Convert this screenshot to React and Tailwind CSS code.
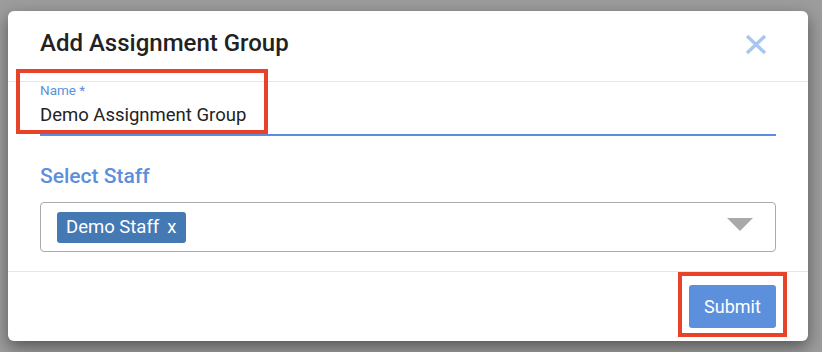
export default function App() {
  return (
    <div className="relative w-[822px] h-[352px] bg-[#9c9c9c] pt-[11px] pl-[8px] font-['Roboto',sans-serif] overflow-hidden">
      <div className="w-[800px] h-[330px] bg-white rounded-[6px] shadow-[0_6px_16px_rgba(0,0,0,0.45)] flex flex-col">
        {/* header */}
        <div className="h-[71px] border-b border-[#e6e6e6] flex items-start justify-between px-8 pt-[18px]">
          <h2 className="text-[24px] leading-[28px] font-medium text-[#222]">Add Assignment Group</h2>
          <button className="mt-[5px] mr-[9px]">
            <svg width="22" height="21" viewBox="0 0 22 21">
              <path d="M2 2 L20 19 M20 2 L2 19" stroke="#a9c6f0" strokeWidth="3.5" />
            </svg>
          </button>
        </div>

        {/* body */}
        <div className="h-[189px] px-8 pb-[19px] flex flex-col">
          <label className="text-[13.5px] leading-[16px] text-[#5b8fdb]">Name *</label>
          <div className="mt-[5px] pb-[7px] border-b-2 border-[#5a8fdb] text-[18.5px] leading-[24px] text-[#222]">
            Demo Assignment Group
          </div>

          <div className="mt-[26px] text-[21px] leading-[28px] font-medium text-[#5b8fdb]">Select Staff</div>

          <div className="mt-3 h-[50px] border border-[#ababab] rounded-[4px] flex items-center justify-between pl-4 pr-[22px]">
            <span className="h-[31px] bg-[#4579b3] rounded-[3px] text-white text-[18.5px] leading-[31px] pl-[9px] pr-[10px]">
              Demo Staff<span className="ml-[8px]">x</span>
            </span>
            <svg width="26" height="13" viewBox="0 0 26 13" className="-mt-[5px]">
              <path d="M0 0 H26 L13 13 Z" fill="#a9a9a9" />
            </svg>
          </div>
        </div>

        {/* footer */}
        <div className="flex-1 border-t border-[#e6e6e6] flex justify-end items-center px-8">
          <button className="w-[87px] h-[43px] bg-[#5c90dc] rounded-[3px] text-white text-[18px]">Submit</button>
        </div>
      </div>

      {/* annotation boxes */}
      <div className="absolute left-[16px] top-[69px] w-[252px] h-[65px] border-4 border-[#e8432a]" />
      <div className="absolute left-[678px] top-[272px] w-[109px] h-[65px] border-4 border-[#e8432a]" />
    </div>
  );
}
